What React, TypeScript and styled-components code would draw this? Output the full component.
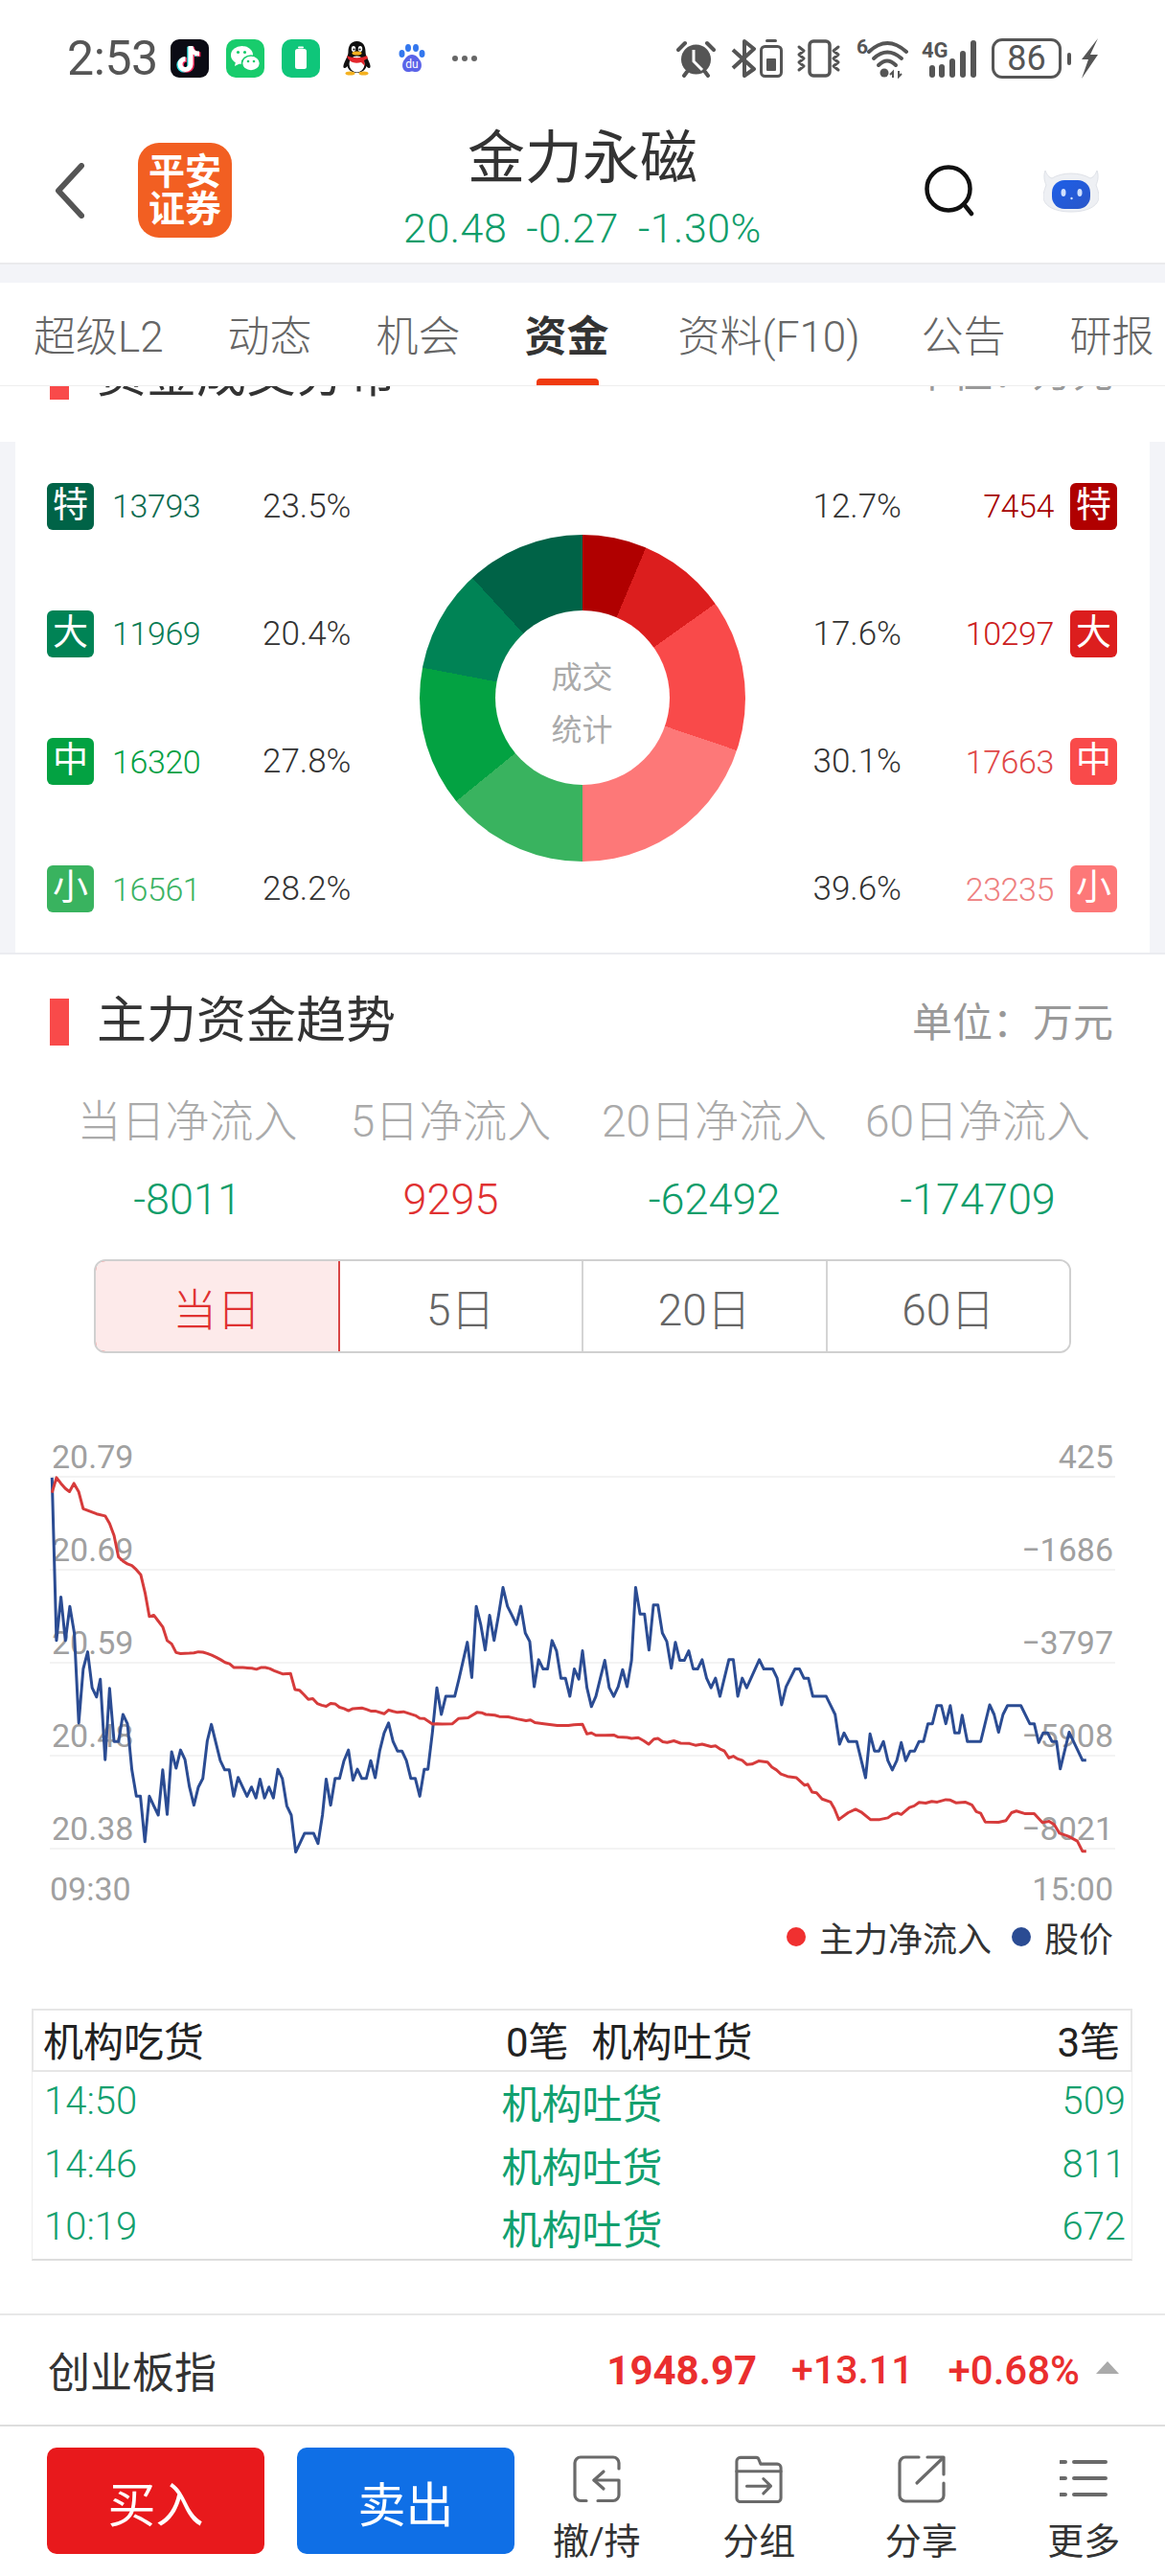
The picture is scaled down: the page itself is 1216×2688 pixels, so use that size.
import React from 'react';
import styled, { createGlobalStyle } from 'styled-components';

const Global = createGlobalStyle`
  html, body { margin: 0; padding: 0; background: #fff; }
  body { width: 1216px; height: 2688px; overflow: hidden; font-family: Roboto, "Noto Sans CJK SC", sans-serif; color: #333; }
  * { box-sizing: border-box; }
`;

const Page = styled.div`
  width: 1216px;
  height: 2688px;
  overflow: hidden;
  display: flex;
  flex-direction: column;
  background: #fff;
`;

/* ---------- status bar ---------- */
const StatusBar = styled.div`
  height: 120px;
  padding: 40px 69px 0 70px;
  display: flex;
  justify-content: space-between;
  align-items: flex-start;
`;
const StatusGroup = styled.div`
  display: flex;
  align-items: center;
  height: 42px;
`;
const Clock = styled.span`
  font-size: 50px;
  line-height: 42px;
  color: #555;
  width: 108px;
  letter-spacing: -0.4px;
`;
const AppIcon = styled.svg<{ $ml?: number }>`
  display: block;
  flex: none;
  margin-left: ${p => p.$ml ?? 0}px;
`;
const BatteryBox = styled.div`
  width: 73px;
  height: 42px;
  margin-left: 15px;
  border: 3.5px solid #555;
  border-radius: 11px;
  display: flex;
  align-items: center;
  justify-content: center;
  font-size: 36px;
  line-height: 1;
  color: #555;
`;
const BatteryNub = styled.div`
  width: 4px;
  height: 13px;
  margin-left: 6px;
  border-radius: 2px;
  background: #555;
`;

/* ---------- header ---------- */
const Header = styled.header`
  height: 156px;
  padding: 0 57px;
  display: grid;
  grid-template-columns: minmax(0, 1fr) auto minmax(0, 1fr);
  align-items: center;
  border-bottom: 2px solid #eaeaec;
`;
const HeaderLeft = styled.div`
  display: flex;
  align-items: center;
  gap: 56px;
  padding-top: 3px;
`;
const Logo = styled.div`
  width: 98px;
  height: 99px;
  border-radius: 22px;
  background: #f25f22;
  color: #fff;
  font-size: 38px;
  line-height: 39px;
  font-weight: 700;
  text-align: center;
  display: flex;
  flex-direction: column;
  align-items: center;
  justify-content: center;
`;
const HeaderCenter = styled.div`
  display: flex;
  flex-direction: column;
  align-items: center;
`;
const StockName = styled.div`
  font-size: 60px;
  line-height: 68px;
  color: #333;
`;
const StockPrice = styled.div`
  margin-top: 13px;
  font-size: 43px;
  line-height: 50px;
  font-weight: 300;
  letter-spacing: 0.5px;
  word-spacing: 9px;
  color: #0f9d6a;
  white-space: pre;
`;
const HeaderRight = styled.div`
  display: flex;
  justify-content: flex-end;
  align-items: center;
  gap: 72px;
  padding: 3px 12px 0 0;
`;

const Band = styled.div`
  height: 19px;
  background: #f3f4f8;
`;

/* ---------- tabs ---------- */
const Tabs = styled.nav`
  height: 108px;
  padding-left: 35px;
  display: flex;
  gap: 67px;
  white-space: nowrap;
  overflow: hidden;
  border-bottom: 1px solid #eee;
`;
const Tab = styled.div<{ $active?: boolean; $inset?: boolean }>`
  position: relative;
  height: 107px;
  font-size: 44px;
  line-height: 115px;
  font-weight: ${p => (p.$active ? 700 : 300)};
  color: ${p => (p.$active ? '#333' : '#666')};
  flex: none;
  ${p => p.$inset && 'padding-left: 5px; margin-right: -3px;'}
  ${p => p.$active && `
    &::after {
      content: '';
      position: absolute;
      left: 12px;
      right: 11px;
      bottom: 0;
      height: 7px;
      background: #f03a10;
      border-radius: 4px 4px 0 0;
    }
  `}
`;

/* ---------- section titles ---------- */
const ClippedTitle = styled.div`
  height: 14px;
  margin-bottom: 44px;
  padding: 0 54px 0 52px;
  display: flex;
  align-items: flex-end;
  justify-content: space-between;
  overflow: hidden;
`;
const ClippedUnit = styled.span`
  font-size: 42px;
  line-height: 40px;
  color: #999;
  margin-bottom: 7px;
`;
const TitleLeft = styled.div`
  display: flex;
  align-items: flex-end;
  gap: 29px;
`;
const TitleMark = styled.div`
  width: 20px;
  height: 49px;
  flex: none;
  background: #f94a4a;
`;
const TitleText = styled.span`
  font-size: 52px;
  line-height: 50px;
  color: #333;
`;
const SectionTitle = styled.div`
  padding: 43px 54px 0 52px;
  display: flex;
  align-items: center;
  justify-content: space-between;
`;
const UnitText = styled.span`
  font-size: 42px;
  line-height: 49px;
  color: #999;
  padding-top: 4px;
`;

/* ---------- distribution ---------- */
const DistributionWrap = styled.section`
  height: 535px;
  padding: 0 16px;
  background: #f3f4f8;
  border-bottom: 2px solid #ebecf0;
`;
const DistributionCard = styled.div`
  height: 533px;
  padding: 42px 34px 41px 33px;
  background: #fff;
  display: grid;
  grid-template-columns: minmax(0, 1fr) 340px minmax(0, 1fr);
`;
const SideColumn = styled.div`
  display: flex;
  flex-direction: column;
  justify-content: space-between;
`;
const BuyRow = styled.div`
  display: grid;
  grid-template-columns: 49px 176px auto;
  align-items: center;
  height: 50px;
`;
const SellRow = styled.div`
  display: grid;
  grid-template-columns: 1fr 159px 66px;
  align-items: center;
  height: 50px;
`;
const Badge = styled.div<{ $bg: string; $end?: boolean }>`
  width: 49px;
  height: 49px;
  justify-self: ${p => (p.$end ? 'end' : 'start')};
  border-radius: 6px;
  background: ${p => p.$bg};
  color: #fff;
  font-size: 37px;
  line-height: 47px;
  text-align: center;
`;
const Amount = styled.span<{ $color: string; $right?: boolean }>`
  font-size: 34px;
  font-weight: 300;
  letter-spacing: -0.4px;
  color: ${p => p.$color};
  padding-left: ${p => (p.$right ? 0 : 19)}px;
  text-align: ${p => (p.$right ? 'right' : 'left')};
`;
const Percent = styled.span<{ $right?: boolean }>`
  font-size: 35px;
  font-weight: 300;
  color: #333;
  text-align: ${p => (p.$right ? 'right' : 'left')};
`;
const DonutCell = styled.div`
  display: flex;
  align-items: center;
  justify-content: center;
`;
const Donut = styled.div`
  width: 340px;
  height: 341px;
  border-radius: 50%;
  background: conic-gradient(
    #b00000 0deg 22.86deg,
    #dc1e1e 22.86deg 54.54deg,
    #f94a4a 54.54deg 108.72deg,
    #fd7878 108.72deg 180deg,
    #39b35f 180deg 230.76deg,
    #03a242 230.76deg 280.8deg,
    #008355 280.8deg 317.5deg,
    #006347 317.5deg 360deg
  );
  display: flex;
  align-items: center;
  justify-content: center;
`;
const DonutHole = styled.div`
  width: 182px;
  height: 182px;
  border-radius: 50%;
  background: #fff;
  padding-top: 14px;
  font-size: 32px;
  line-height: 55px;
  color: #aaa;
  display: flex;
  flex-direction: column;
  align-items: center;
  justify-content: center;
`;

/* ---------- stats ---------- */
const StatsGrid = styled.div`
  margin: 56px 58px 0;
  display: grid;
  grid-template-columns: repeat(4, 275px);
  text-align: center;
`;
const StatLabel = styled.div`
  font-size: 46px;
  line-height: 44px;
  font-weight: 300;
  color: #aaa;
  white-space: nowrap;
`;
const StatValue = styled.div<{ $up?: boolean }>`
  margin-top: 38px;
  font-size: 45px;
  line-height: 44px;
  font-weight: 300;
  color: ${p => (p.$up ? '#e03131' : '#0f9d6a')};
`;

/* ---------- segments ---------- */
const Segments = styled.div`
  margin: 40px 98px 0;
  height: 98px;
  display: flex;
  border: 2px solid #d0d0d0;
  border-radius: 12px;
  overflow: hidden;
`;
const Segment = styled.div<{ $active?: boolean }>`
  flex: 1;
  display: flex;
  align-items: center;
  justify-content: center;
  font-size: 46px;
  font-weight: 300;
  color: ${p => (p.$active ? '#e03131' : '#666')};
  background: ${p => (p.$active ? '#fdeaea' : '#fff')};
  ${p => (p.$active ? 'box-shadow: 0 0 0 2px #d84545;' : '')}
  border-right: 2px solid ${p => (p.$active ? '#d84545' : '#d4d4d4')};
  &:last-child { border-right: 0; }
`;

/* ---------- chart ---------- */
const ChartBox = styled.div`
  position: relative;
  margin-top: 87px;
  padding: 0 52px;
`;
const ChartRow = styled.div<{ $first?: boolean }>`
  height: ${p => (p.$first ? 43 : 97)}px;
  border-bottom: 2px solid #f3f3f3;
  display: flex;
  justify-content: space-between;
  align-items: flex-end;
  padding: 0 2px;
  font-size: 34px;
  line-height: 40px;
  color: #a0a0a0;
`;
const ChartOverlay = styled.svg`
  position: absolute;
  left: 0;
  top: -20px;
  width: 1216px;
  height: 560px;
  pointer-events: none;
`;
const ChartLine = styled.polyline<{ $color: string }>`
  fill: none;
  stroke: ${p => p.$color};
  stroke-width: 3px;
  stroke-linejoin: round;
  vector-effect: non-scaling-stroke;
`;
const TimeAxis = styled.div`
  height: 62px;
  padding: 20px 54px 0 52px;
  display: flex;
  justify-content: space-between;
  align-items: center;
  font-size: 34px;
  color: #a0a0a0;
`;
const Legend = styled.div`
  margin-top: 7px;
  height: 44px;
  padding-right: 54px;
  display: flex;
  justify-content: flex-end;
  align-items: center;
  font-size: 36px;
  color: #333;
`;
const LegendDot = styled.i<{ $color: string; $ml?: number }>`
  display: block;
  width: 20px;
  height: 20px;
  border-radius: 50%;
  margin: 0 14px 0 ${p => p.$ml ?? 0}px;
  background: ${p => p.$color};
`;

/* ---------- table ---------- */
const Table = styled.div`
  margin: 53px 34px 0 33px;
  height: 263px;
  border-left: 1px solid #eee;
  border-right: 1px solid #eee;
  border-bottom: 2px solid #ddd;
`;
const TableHead = styled.div`
  height: 66px;
  border: 2px solid #e6e6e6;
  margin: 0 -1px;
  padding-top: 5px;
  display: grid;
  grid-template-columns: 1fr 1fr;
  font-size: 42px;
  line-height: 58px;
  color: #222;
`;
const HeadCell = styled.div<{ $pad: number }>`
  display: flex;
  justify-content: space-between;
  padding: 0 ${p => p.$pad}px 0 10px;
`;
const TableRow = styled.div`
  height: 65.5px;
  padding: 0 6px 5px;
  display: grid;
  grid-template-columns: 1fr auto 1fr;
  align-items: center;
  color: #12a06e;
`;
const TimeCell = styled.span`
  font-size: 40px;
  font-weight: 300;
  padding-left: 6px;
`;
const ActionCell = styled.span`
  font-size: 42px;
`;
const VolumeCell = styled.span`
  font-size: 40px;
  font-weight: 300;
  text-align: right;
`;

/* ---------- index row ---------- */
const IndexRow = styled.div`
  margin-top: 55px;
  height: 118px;
  padding: 0 48px 0 50px;
  border-top: 2px solid #e8e8e8;
  border-bottom: 2px solid #ddd;
  display: flex;
  align-items: center;
  justify-content: space-between;
`;
const IndexName = styled.span`
  font-size: 44px;
  color: #333;
`;
const IndexValues = styled.div`
  display: flex;
  align-items: center;
  color: #ea2e2e;
`;
const IndexValue = styled.span<{ $bold?: boolean; $size: number; $gap: number }>`
  font-size: ${p => p.$size}px;
  font-weight: ${p => (p.$bold ? 700 : 500)};
  margin-right: ${p => p.$gap}px;
`;
const UpArrow = styled.i`
  display: block;
  width: 0;
  height: 0;
  margin-top: -6px;
  border-left: 12px solid transparent;
  border-right: 12px solid transparent;
  border-bottom: 13px solid #aaa;
`;

/* ---------- bottom bar ---------- */
const BottomBar = styled.footer`
  flex: 1;
  padding: 22px 0 0 49px;
  display: flex;
  align-items: flex-start;
`;
const TradeButton = styled.div<{ $bg: string; $mr: number }>`
  width: 227px;
  height: 111px;
  margin-right: ${p => p.$mr}px;
  border-radius: 10px;
  background: ${p => p.$bg};
  color: #fff;
  font-size: 50px;
  display: flex;
  align-items: center;
  justify-content: center;
`;
const ToolGrid = styled.div`
  flex: 1;
  display: grid;
  grid-template-columns: repeat(4, 1fr);
  padding-top: 8px;
`;
const Tool = styled.div`
  display: flex;
  flex-direction: column;
  align-items: center;
  gap: 20px;
  font-size: 38px;
  line-height: 40px;
  color: #333;
`;
const ToolIcon = styled.svg`
  display: block;
  width: 50px;
  height: 50px;
  fill: none;
  stroke: #6a6a6a;
  stroke-width: 3.2;
  stroke-linecap: round;
  stroke-linejoin: round;
`;

/* ---------- data ---------- */
const blueL = [[140,176],[152,652],[164,525],[176,652],[188,552],[200,630],[212,893],[224,735],[236,685],[248,790],[260,817],[270,765],[283,1000],[295,792],[307,947],[319,947],[331,868],[343,895],[355,1030],[367,1107],[378,1107],[390,1240],[402,1107],[414,1135],[426,1162],[438,1030],[450,1160],[462,977],[474,1025],[486,972],[498,1000],[510,1080],[522,1133],[534,1080],[546,1055],[558,945],[569,897],[581,950],[593,1003],[605,1030],[617,1030],[629,1107],[641,1052],[653,1080],[665,1107],[677,1080],[689,1112],[700,1057],[712,1112],[724,1080],[736,1112],[748,1028],[760,1055],[772,1135],[784,1162],[796,1270],[808,1243],[820,1215],[832,1215],[844,1215],[856,1245],[868,1162],[878,1057],[890,1133],[902,1055],[914,1055],[926,1003],[938,972],[950,1060],[962,1028],[974,1055],[986,1055],[998,1003],[1010,1053],[1022,975],[1034,922],[1046,893],[1058,947],[1070,975],[1082,975],[1094,1003],[1106,1055],[1118,1055],[1130,1107],[1142,1028],[1152,1028],[1164,920],[1176,790],[1188,868],[1200,815],[1212,815],[1224,815],[1236,762],[1258,657],[1270,760],[1282,552],[1294,605],[1306,680],[1318,578],[1330,652],[1342,578],[1354,497],[1366,552],[1378,578],[1390,605],[1402,552],[1414,630],[1426,655],[1438,787],[1450,708],[1462,735],[1474,735],[1486,652],[1498,682],[1510,762],[1522,762],[1534,815],[1546,735],[1558,765],[1568,682]];
const blueR = [[12,790],[24,845],[36,815],[48,762],[60,710],[72,790],[84,815],[96,787],[108,737],[120,787],[132,710],[143,497],[155,575],[167,575],[179,680],[191,548],[203,548],[215,630],[227,655],[239,733],[250,657],[262,710],[274,710],[286,682],[298,735],[310,735],[322,708],[334,762],[346,790],[358,762],[370,815],[394,708],[406,708],[418,815],[430,762],[442,790],[476,708],[488,735],[512,735],[524,762],[536,840],[548,787],[572,735],[584,735],[596,762],[608,762],[620,815],[656,815],[680,868],[692,955],[704,922],[716,947],[738,947],[762,1053],[774,925],[786,975],[798,975],[810,947],[822,1003],[834,1030],[846,1003],[858,950],[870,1003],[882,975],[894,975],[906,947],[918,947],[930,895],[942,895],[954,842],[966,842],[978,895],[990,842],[1002,922],[1014,922],[1022,870],[1036,947],[1072,947],[1096,840],[1108,868],[1120,920],[1132,868],[1144,842],[1180,842],[1204,895],[1216,895],[1228,950],[1240,922],[1252,922],[1264,947],[1276,947],[1286,1027],[1310,920],[1346,1002],[1356,1002]];
const redL = [[140,220],[152,176],[164,193],[176,208],[187,217],[199,193],[212,218],[224,267],[236,272],[260,282],[283,288],[295,310],[307,345],[319,408],[331,420],[343,428],[355,433],[367,445],[379,460],[391,515],[402,582],[414,578],[426,595],[438,612],[450,652],[462,662],[474,687],[486,690],[510,689],[522,688],[534,685],[546,686],[558,690],[570,695],[582,701],[594,708],[606,716],[618,720],[630,731],[654,731],[666,732],[678,733],[690,736],[702,731],[714,731],[726,734],[738,740],[762,750],[782,748],[794,795],[806,797],[818,810],[830,824],[842,822],[854,836],[866,841],[878,844],[890,836],[902,837],[914,847],[926,851],[938,857],[950,851],[974,849],[986,853],[998,858],[1010,858],[1034,866],[1046,855],[1058,859],[1070,862],[1086,860],[1098,864],[1118,871],[1130,879],[1142,880],[1164,896],[1176,895],[1190,896],[1218,895],[1234,880],[1260,878],[1284,862],[1296,863],[1308,868],[1332,870],[1344,874],[1368,875],[1392,881],[1416,886],[1428,884],[1440,892],[1464,895],[1500,900],[1530,900],[1545,898],[1568,897]];
const redR = [[12,925],[24,922],[36,929],[60,929],[84,928],[96,934],[120,935],[132,938],[150,936],[165,945],[178,955],[192,940],[203,938],[216,948],[228,950],[246,945],[264,952],[288,953],[304,958],[322,955],[346,962],[358,960],[372,970],[382,975],[394,995],[406,990],[418,998],[430,1002],[442,1014],[456,1013],[474,1004],[498,1007],[510,1022],[522,1030],[534,1042],[552,1049],[576,1053],[598,1075],[606,1072],[618,1095],[630,1097],[645,1115],[668,1124],[678,1143],[690,1175],[715,1155],[735,1145],[750,1153],[775,1175],[800,1175],[822,1170],[835,1160],[848,1156],[858,1160],[880,1140],[893,1135],[906,1125],[924,1127],[940,1122],[955,1124],[978,1117],[990,1118],[1005,1126],[1030,1124],[1048,1132],[1060,1152],[1072,1157],[1084,1182],[1120,1183],[1140,1178],[1155,1155],[1168,1150],[1192,1158],[1216,1158],[1238,1184],[1256,1180],[1270,1190],[1284,1215],[1308,1224],[1332,1238],[1346,1268],[1356,1268]];
const toPoints = (l: number[][], r: number[][]) =>
  [...l, ...r.map(([x, y]) => [x + 1568, y])].map(p => p.join(',')).join(' ');

const buy = [
  { k: '特', bg: '#006347', c: '#0c6b4f', a: '13793', p: '23.5%' },
  { k: '大', bg: '#008355', c: '#0a7d55', a: '11969', p: '20.4%' },
  { k: '中', bg: '#03a242', c: '#04a044', a: '16320', p: '27.8%' },
  { k: '小', bg: '#39b35f', c: '#3db364', a: '16561', p: '28.2%' },
];
const sell = [
  { k: '特', bg: '#b00000', c: '#a50000', a: '7454', p: '12.7%' },
  { k: '大', bg: '#dc1e1e', c: '#cc2020', a: '10297', p: '17.6%' },
  { k: '中', bg: '#f94a4a', c: '#e04848', a: '17663', p: '30.1%' },
  { k: '小', bg: '#fd7878', c: '#ee8080', a: '23235', p: '39.6%' },
];
const stats = [
  { l: '当日净流入', v: '-8011' },
  { l: '5日净流入', v: '9295', up: true },
  { l: '20日净流入', v: '-62492' },
  { l: '60日净流入', v: '-174709' },
];
const axis = [
  ['20.79', '425'],
  ['20.69', '−1686'],
  ['20.59', '−3797'],
  ['20.48', '−5908'],
  ['20.38', '−8021'],
];
const trades = [
  ['14:50', '509'],
  ['14:46', '811'],
  ['10:19', '672'],
];

export default function App() {
  return (
    <Page>
      <Global />
      <StatusBar>
        <StatusGroup>
          <Clock>2:53</Clock>
          <AppIcon width="40" height="40" viewBox="0 0 40 40">
            <rect width="40" height="40" rx="9" fill="#0b0b14" />
            <g fill="none" strokeWidth="5">
              <path d="M21 7v19a5.5 5.5 0 1 1-5.5-5.5M21 7c0 5 4 8 9 8" stroke="#2ce6e8" transform="translate(-1.2 .8)" />
              <path d="M21 7v19a5.5 5.5 0 1 1-5.5-5.5M21 7c0 5 4 8 9 8" stroke="#f5285a" transform="translate(1.4 .8)" />
              <path d="M21 7v19a5.5 5.5 0 1 1-5.5-5.5M21 7c0 5 4 8 9 8" stroke="#fff" />
            </g>
          </AppIcon>
          <AppIcon $ml={18} width="40" height="40" viewBox="0 0 40 40">
            <rect width="40" height="40" rx="10" fill="#18cc6c" />
            <ellipse cx="16.5" cy="16.5" rx="11.5" ry="9.5" fill="#fff" />
            <path d="M10 23l-1 5 6-3z" fill="#fff" />
            <ellipse cx="26" cy="25" rx="9.5" ry="8" fill="#fff" stroke="#18cc6c" strokeWidth="1.6" />
            <circle cx="12.5" cy="13.5" r="1.6" fill="#18cc6c" />
            <circle cx="19.5" cy="13.5" r="1.6" fill="#18cc6c" />
            <circle cx="23" cy="23" r="1.3" fill="#18cc6c" />
            <circle cx="29" cy="23" r="1.3" fill="#18cc6c" />
          </AppIcon>
          <AppIcon $ml={18} width="40" height="40" viewBox="0 0 40 40">
            <rect width="40" height="40" rx="10" fill="#0fc67a" />
            <rect x="14" y="10" width="12" height="21" rx="2.5" fill="#fff" />
            <rect x="17" y="7.5" width="6" height="2" rx="1" fill="#fff" />
          </AppIcon>
          <AppIcon $ml={23} width="31" height="36" viewBox="0 0 31 36">
            <path d="M15.5 0C9 0 6.5 5 6.5 11c0 3-1 5-3 9-2 4-3 8-1 8s3-2 3-2c1 4 5 7 10 7s9-3 10-7c0 0 1 2 3 2s1-4-1-8c-2-4-3-6-3-9 0-6-2.500-11-9-11z" fill="#111" />
            <ellipse cx="15.5" cy="24" rx="8" ry="8.500" fill="#fff" />
            <path d="M5 15c6 3 15 3 21 0l1 3-4 2 1 6-4-4c-4 1-8 1-11-1l-3-3z" fill="#e3262c" />
            <ellipse cx="12" cy="8" rx="2.200" ry="3" fill="#fff" />
            <ellipse cx="19" cy="8" rx="2.200" ry="3" fill="#fff" />
            <circle cx="12.500" cy="8.500" r="1.100" fill="#111" />
            <circle cx="18.500" cy="8.500" r="1.100" fill="#111" />
            <ellipse cx="15.500" cy="12.500" rx="5" ry="2" fill="#f4b120" />
            <ellipse cx="8.500" cy="33.500" rx="5" ry="2" fill="#f4b120" />
            <ellipse cx="22.500" cy="33.500" rx="5" ry="2" fill="#f4b120" />
          </AppIcon>
          <AppIcon $ml={28} width="28" height="30" viewBox="0 0 28 30">
            <ellipse cx="3.500" cy="10" rx="3" ry="4" fill="#3377ee" />
            <ellipse cx="10" cy="4" rx="3" ry="4" fill="#3377ee" />
            <ellipse cx="18" cy="4" rx="3" ry="4" fill="#3377ee" />
            <ellipse cx="24.500" cy="10" rx="3" ry="4" fill="#3377ee" />
            <path d="M14 11c5 0 7 4 9 7 2 4 1 11-5 11-2 0-3-.5-4-.5s-2 .5-4 .5c-6 0-7-7-5-11 2-3 4-7 9-7z" fill="#5a63e8" />
            <text x="14" y="25" textAnchor="middle" fontSize="12" fontFamily="Roboto, sans-serif" fill="#fff">du</text>
          </AppIcon>
          <AppIcon $ml={27} width="28" height="8" viewBox="0 0 28 8">
            <g fill="#666"><circle cx="4" cy="4" r="3" /><circle cx="14" cy="4" r="3" /><circle cx="24" cy="4" r="3" /></g>
          </AppIcon>
        </StatusGroup>
        <StatusGroup>
          <AppIcon width="41" height="41" viewBox="0 0 41 41">
            <circle cx="20.500" cy="21" r="15.500" fill="#555" />
            <path d="M2 11l7-7M39 11l-7-7M8 38l3-4M33 38l-3-4" stroke="#555" strokeWidth="4" strokeLinecap="round" />
            <path d="M18 11v12l9 9" fill="none" stroke="#fff" strokeWidth="3" />
          </AppIcon>
          <AppIcon $ml={16} width="26" height="40" viewBox="0 0 26 40">
            <path d="M2 11l22 20-10 7V2l10 8L2 30" fill="none" stroke="#555" strokeWidth="4" strokeLinejoin="round" />
          </AppIcon>
          <AppIcon $ml={4} width="24" height="40" viewBox="0 0 24 40">
            <rect x="6" y="0" width="12" height="3" rx="1.500" fill="#555" />
            <rect x="1.500" y="7.500" width="21" height="31" rx="4" fill="none" stroke="#555" strokeWidth="3" />
            <rect x="7" y="20" width="10" height="13" rx="1" fill="#555" />
          </AppIcon>
          <AppIcon $ml={14} width="48" height="40" viewBox="0 0 48 40">
            <rect x="14" y="2" width="21" height="36" rx="4" fill="none" stroke="#555" strokeWidth="3.500" />
            <path d="M3 8l5 4-5 4 5 4-5 4 5 4-5 4M44 8l-5 4 5 4-5 4 5 4-5 4 5 4" fill="none" stroke="#555" strokeWidth="3" strokeLinecap="round" strokeLinejoin="round" />
          </AppIcon>
          <AppIcon $ml={15} width="56" height="41" viewBox="0 0 56 41">
            <text x="0" y="15" fontSize="21" fontWeight="700" fontFamily="Roboto, sans-serif" fill="#555">6</text>
            <g fill="none" stroke="#555" strokeWidth="4" strokeLinecap="round">
              <path d="M13 13Q32 -5 52 13" />
              <path d="M18 20Q32 7 47 20" />
              <path d="M23 27Q32 18 41 27" />
            </g>
            <circle cx="29" cy="35" r="4.500" fill="#555" />
            <path d="M38 40v-6l-3 3M44 33v6l3-3" fill="none" stroke="#555" strokeWidth="2" />
          </AppIcon>
          <AppIcon $ml={12} width="58" height="41" viewBox="0 0 58 41">
            <text x="0" y="19" fontSize="22" fontWeight="700" fontFamily="Roboto, sans-serif" fill="#555">4G</text>
            <g fill="#555">
              <rect x="8" y="27" width="6" height="13" rx="3" />
              <rect x="18" y="26" width="6" height="14" rx="3" />
              <rect x="29" y="20" width="6" height="20" rx="3" />
              <rect x="40" y="12" width="6" height="28" rx="3" />
              <rect x="51" y="1" width="6" height="39" rx="3" />
            </g>
          </AppIcon>
          <BatteryBox>86</BatteryBox>
          <BatteryNub />
          <AppIcon $ml={9} width="20" height="42" viewBox="0 0 20 42">
            <path d="M19 0L2 22h7L2 42l17-25h-8z" fill="#555" />
          </AppIcon>
        </StatusGroup>
      </StatusBar>

      <Header>
        <HeaderLeft>
          <svg width="31" height="58" viewBox="0 0 31 58">
            <path d="M28 3L4 29l24 26" fill="none" stroke="#555" strokeWidth="6" strokeLinecap="round" strokeLinejoin="round" />
          </svg>
          <Logo>
            <span>平安</span>
            <span>证券</span>
          </Logo>
        </HeaderLeft>
        <HeaderCenter>
          <StockName>金力永磁</StockName>
          <StockPrice>20.48 -0.27 -1.30%</StockPrice>
        </HeaderCenter>
        <HeaderRight>
          <svg width="52" height="54" viewBox="0 0 52 54">
            <circle cx="25" cy="25" r="22.500" fill="none" stroke="#111" strokeWidth="4.500" />
            <path d="M41 41l8 10" stroke="#111" strokeWidth="4.500" strokeLinecap="round" />
          </svg>
          <svg width="58" height="46" viewBox="0 0 58 46">
            <defs>
              <linearGradient id="visor" x1="0" y1="0" x2="1" y2="1">
                <stop offset="0" stopColor="#1d5fe8" />
                <stop offset="1" stopColor="#2a56c8" />
              </linearGradient>
            </defs>
            <path d="M2 2c2 5 4 7 7 8 5-3 12-5 20-5s15 2 20 5c3-1 5-3 7-8 2 5 1 11-1 15 2 5 3 9 3 12 0 10-12 16-29 16S0 39 0 29c0-3 1-7 3-12C1 13 0 7 2 2z" fill="#eef0f4" stroke="#dfe2e8" />
            <rect x="9" y="12" width="40" height="30" rx="13" fill="url(#visor)" />
            <ellipse cx="21" cy="25" rx="2.500" ry="4" fill="#cfe0ff" />
            <ellipse cx="38" cy="25" rx="2.500" ry="4" fill="#cfe0ff" />
            <circle cx="29.500" cy="31" r="1.200" fill="#cfe0ff" />
          </svg>
        </HeaderRight>
      </Header>
      <Band />

      <Tabs>
        <Tab>超级L2</Tab>
        <Tab>动态</Tab>
        <Tab>机会</Tab>
        <Tab $active>资金</Tab>
        <Tab $inset>资料(F10)</Tab>
        <Tab>公告</Tab>
        <Tab>研报</Tab>
      </Tabs>

      <ClippedTitle>
        <TitleLeft>
          <TitleMark />
          <TitleText>资金成交分布</TitleText>
        </TitleLeft>
        <ClippedUnit>单位：万元</ClippedUnit>
      </ClippedTitle>

      <DistributionWrap>
        <DistributionCard>
          <SideColumn>
            {buy.map(r => (
              <BuyRow key={r.k}>
                <Badge $bg={r.bg}>{r.k}</Badge>
                <Amount $color={r.c}>{r.a}</Amount>
                <Percent>{r.p}</Percent>
              </BuyRow>
            ))}
          </SideColumn>
          <DonutCell>
            <Donut>
              <DonutHole>
                <span>成交</span>
                <span>统计</span>
              </DonutHole>
            </Donut>
          </DonutCell>
          <SideColumn>
            {sell.map(r => (
              <SellRow key={r.k}>
                <Percent $right>{r.p}</Percent>
                <Amount $right $color={r.c}>{r.a}</Amount>
                <Badge $end $bg={r.bg}>{r.k}</Badge>
              </SellRow>
            ))}
          </SideColumn>
        </DistributionCard>
      </DistributionWrap>

      <SectionTitle>
        <TitleLeft>
          <TitleMark />
          <TitleText>主力资金趋势</TitleText>
        </TitleLeft>
        <UnitText>单位：万元</UnitText>
      </SectionTitle>

      <StatsGrid>
        {stats.map(s => (
          <div key={s.l}>
            <StatLabel>{s.l}</StatLabel>
            <StatValue $up={s.up}>{s.v}</StatValue>
          </div>
        ))}
      </StatsGrid>

      <Segments>
        <Segment $active>当日</Segment>
        <Segment>5日</Segment>
        <Segment>20日</Segment>
        <Segment>60日</Segment>
      </Segments>

      <ChartBox>
        {axis.map((a, i) => (
          <ChartRow key={a[0]} $first={i === 0}>
            <span>{a[0]}</span>
            <span>{a[1]}</span>
          </ChartRow>
        ))}
        <ChartOverlay viewBox="0 0 3136 1568" preserveAspectRatio="none">
          <ChartLine $color="#2b4c93" points={toPoints(blueL, blueR)} />
          <ChartLine $color="#d63b3b" points={toPoints(redL, redR)} />
        </ChartOverlay>
      </ChartBox>
      <TimeAxis>
        <span>09:30</span>
        <span>15:00</span>
      </TimeAxis>
      <Legend>
        <LegendDot $color="#f03030" />
        主力净流入
        <LegendDot $color="#2b4c93" $ml={21} />
        股价
      </Legend>

      <Table>
        <TableHead>
          <HeadCell $pad={14}>
            <span>机构吃货</span>
            <span>0笔</span>
          </HeadCell>
          <HeadCell $pad={11}>
            <span>机构吐货</span>
            <span>3笔</span>
          </HeadCell>
        </TableHead>
        {trades.map(t => (
          <TableRow key={t[0]}>
            <TimeCell>{t[0]}</TimeCell>
            <ActionCell>机构吐货</ActionCell>
            <VolumeCell>{t[1]}</VolumeCell>
          </TableRow>
        ))}
      </Table>

      <IndexRow>
        <IndexName>创业板指</IndexName>
        <IndexValues>
          <IndexValue $bold $size={42} $gap={36}>1948.97</IndexValue>
          <IndexValue $size={41} $gap={36}>+13.11</IndexValue>
          <IndexValue $size={42} $gap={17}>+0.68%</IndexValue>
          <UpArrow />
        </IndexValues>
      </IndexRow>

      <BottomBar>
        <TradeButton $bg="#e8191c" $mr={34}>买入</TradeButton>
        <TradeButton $bg="#0f6fe6" $mr={1}>卖出</TradeButton>
        <ToolGrid>
          <Tool>
            <ToolIcon viewBox="0 0 50 50">
              <path d="M14 47.500H8a6 6 0 0 1-6-6V8a6 6 0 0 1 6-6h34a6 6 0 0 1 6 6v6" />
              <path d="M26 47.500h16a6 6 0 0 0 6-6V26H22" />
              <path d="M32 17l-10 9 10 9" />
            </ToolIcon>
            撤/持
          </Tool>
          <Tool>
            <ToolIcon viewBox="0 0 52 51">
              <path d="M2 6a4 4 0 0 1 4-4h17a3 3 0 0 1 3 2l2 5h18a4 4 0 0 1 4 4v33a4 4 0 0 1-4 4H6a4 4 0 0 1-4-4z" />
              <path d="M2 17h48" />
              <path d="M13 33h26M31 25l8 8-8 8" />
            </ToolIcon>
            分组
          </Tool>
          <Tool>
            <ToolIcon viewBox="0 0 50 50">
              <path d="M22 2H8a6 6 0 0 0-6 6v34a6 6 0 0 0 6 6h34a6 6 0 0 0 6-6V29" />
              <path d="M31 2h17v18" />
              <path d="M47 3L20 29" />
            </ToolIcon>
            分享
          </Tool>
          <Tool>
            <ToolIcon viewBox="0 0 50 50">
              <path d="M1 7h5M1 24h5M1 41h5M15 7h33M15 24h33M15 41h33" strokeWidth="4" />
            </ToolIcon>
            更多
          </Tool>
        </ToolGrid>
      </BottomBar>
    </Page>
  );
}
